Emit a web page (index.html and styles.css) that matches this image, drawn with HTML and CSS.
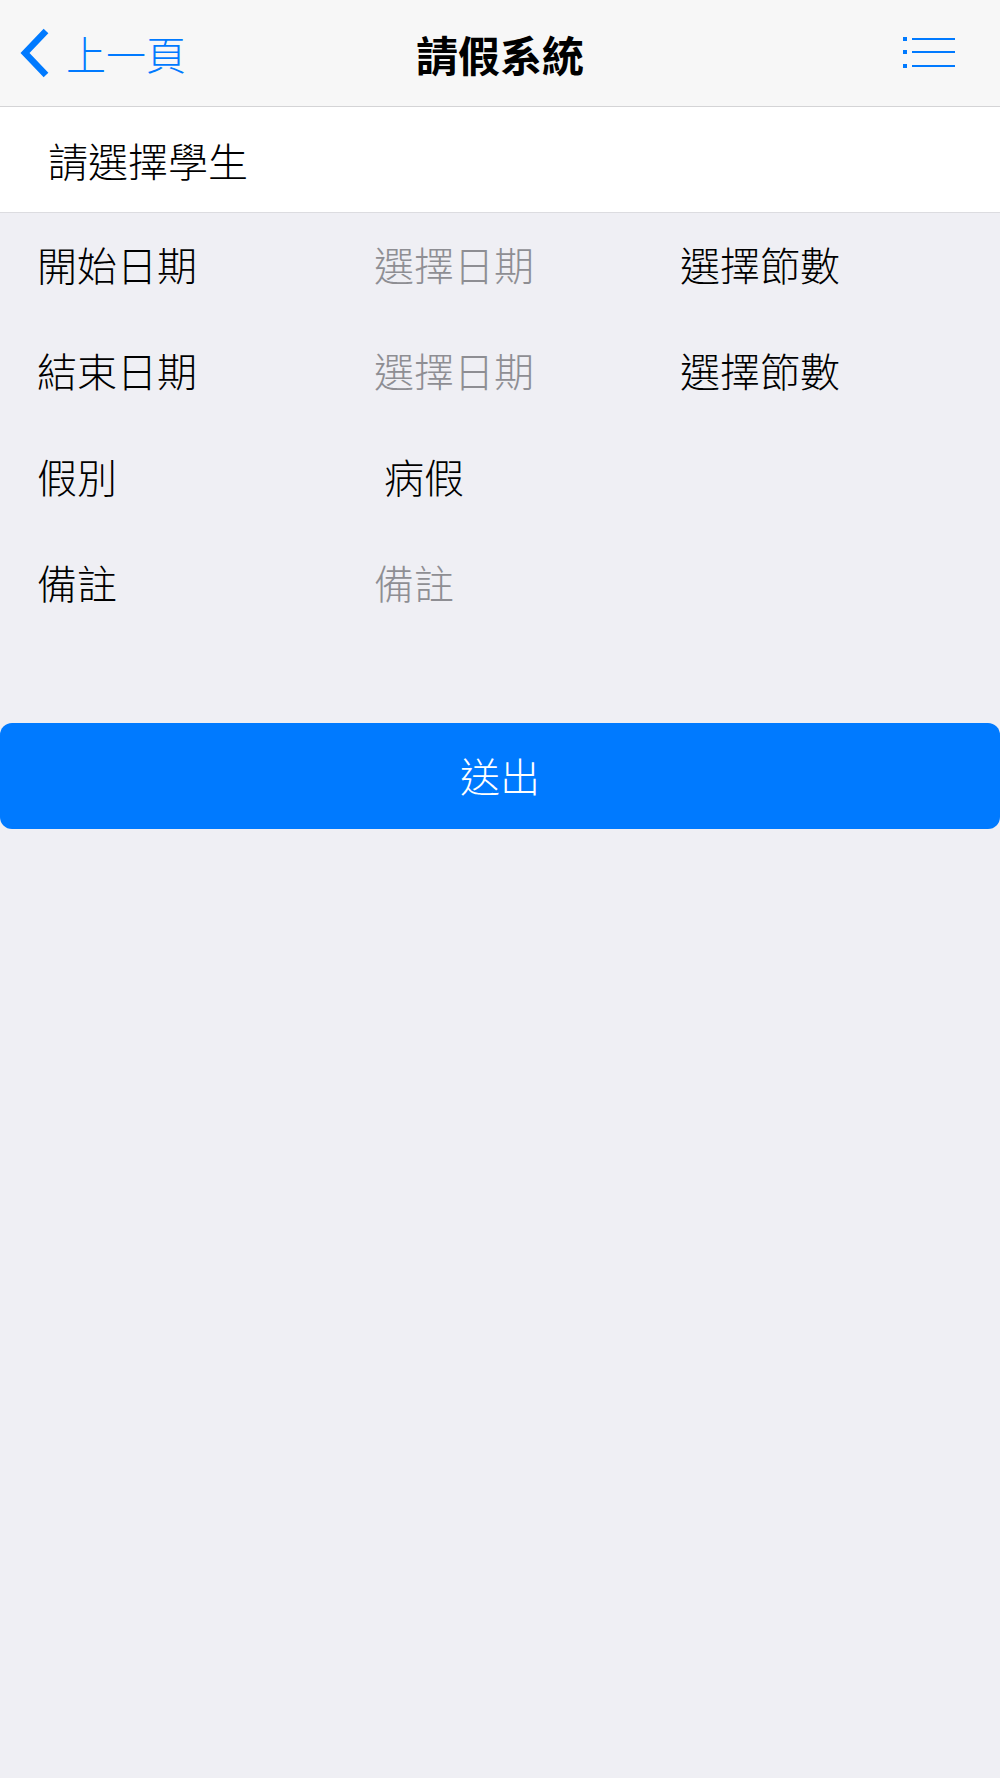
FILE: index.html
```html
<!DOCTYPE html>
<html lang="zh-Hant">
<head>
  <meta charset="UTF-8">
  <title>請假系統</title>
  <link rel="stylesheet" href="styles.css">
</head>
<body>

  <div class="navbar">
    <div class="nav-back">
      <svg class="chevron" width="32" height="50" viewBox="0 0 32 50">
        <polyline points="28,3 7,25 28,47" fill="none" stroke="#007aff" stroke-width="6.5" stroke-linejoin="miter"/>
      </svg>
      <span>上一頁</span>
    </div>
    <div class="nav-title">請假系統</div>
    <div class="nav-menu">
      <svg width="52" height="34" viewBox="0 0 52 34">
        <rect x="0" y="1" width="4" height="4" fill="#007aff"/>
        <rect x="9" y="2" width="43" height="2" fill="#007aff"/>
        <rect x="0" y="14" width="4" height="4" fill="#007aff"/>
        <rect x="9" y="15" width="43" height="2" fill="#007aff"/>
        <rect x="0" y="28" width="4" height="4" fill="#007aff"/>
        <rect x="9" y="29" width="43" height="2" fill="#007aff"/>
      </svg>
    </div>
  </div>

  <div class="student">請選擇學生</div>

  <div class="form">
    <div class="row">
      <div class="label">開始日期</div>
      <div class="value placeholder">選擇日期</div>
      <div class="value">選擇節數</div>
    </div>
    <div class="row">
      <div class="label">結束日期</div>
      <div class="value placeholder">選擇日期</div>
      <div class="value">選擇節數</div>
    </div>
    <div class="row">
      <div class="label">假別</div>
      <div class="value indent">病假</div>
      <div class="value"></div>
    </div>
    <div class="row">
      <div class="label">備註</div>
      <div class="value placeholder">備註</div>
      <div class="value"></div>
    </div>
  </div>

  <button class="submit">送出</button>

</body>
</html>
```

FILE: styles.css
```css
body {
  margin: 0;
  background: #efeff4;
  font-family: "Noto Sans CJK TC", "Noto Sans CJK SC", sans-serif;
  font-weight: 300;
  color: #000;
}

.navbar {
  height: 106px;
  background: #f7f7f7;
  border-bottom: 1px solid #d4d4d6;
  display: flex;
  align-items: center;
  justify-content: space-between;
  padding: 0 45px 0 18px;
  position: relative;
}
.nav-back {
  display: flex;
  align-items: center;
  gap: 16px;
  color: #007aff;
  font-size: 40px;
}
.chevron {
  display: block;
}
.nav-title {
  position: absolute;
  left: 0;
  right: 0;
  text-align: center;
  font-size: 42px;
  font-weight: 700;
  pointer-events: none;
}
.nav-menu svg {
  display: block;
}

.student {
  height: 105px;
  background: #fff;
  border-bottom: 1px solid #dcdce0;
  display: flex;
  align-items: center;
  padding-left: 48px;
  font-size: 40px;
}

.form {
  padding-bottom: 86px;
}
.row {
  height: 106px;
  display: grid;
  grid-template-columns: 337px 306px 1fr;
  align-items: center;
  padding-left: 37px;
  padding-bottom: 4px;
  box-sizing: border-box;
  font-size: 40px;
}
.placeholder {
  color: #8e8e93;
}
.indent {
  padding-left: 10px;
}

.submit {
  display: block;
  width: 100%;
  height: 106px;
  padding-bottom: 4px;
  border: none;
  border-radius: 12px;
  background: #007aff;
  color: #fff;
  font-family: inherit;
  font-weight: 300;
  font-size: 40px;
}
```
